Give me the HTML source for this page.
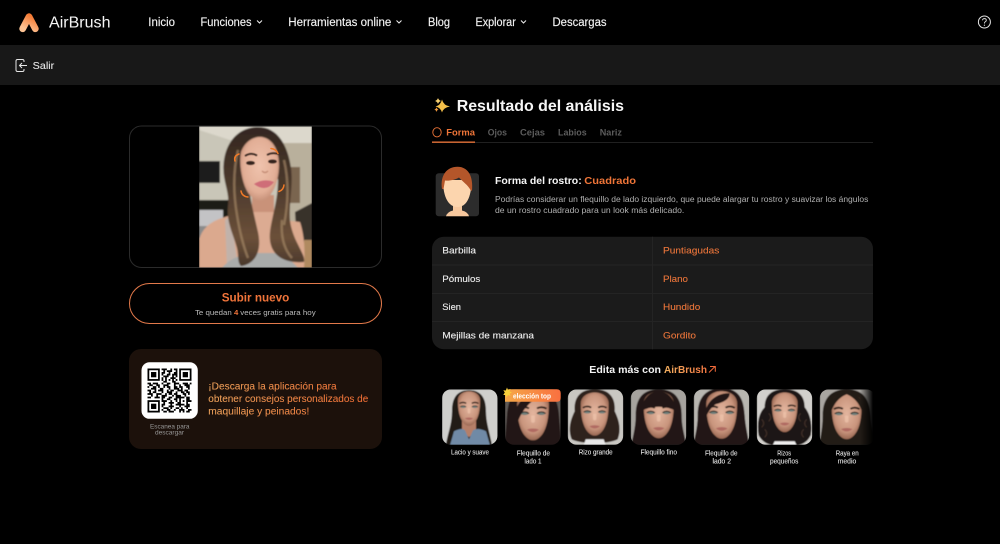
<!DOCTYPE html>
<html lang="es">
<head>
<meta charset="utf-8">
<title>AirBrush</title>
<style>
html,body{margin:0;padding:0;background:#000;width:1000px;height:544px;overflow:hidden}
svg.root{display:block;filter:blur(.22px)}
text{font-family:"Liberation Sans",Arial,sans-serif}
.n{font-size:11.5px;fill:#f2f2f2;stroke:#f2f2f2;stroke-width:.15}
.b{font-weight:bold}
.r{font-size:9.5px;fill:#eee;stroke:#eee;stroke-width:.12}
.v{font-size:9.5px;fill:#e8743a;stroke:#e8743a;stroke-width:.12}
.t{font-size:9.5px;font-weight:bold;fill:#5c5c5c}
.p{font-size:8px;fill:#b0b0b0}
.l{font-size:7px;fill:#e6e6e6;stroke:#e6e6e6;stroke-width:.08}
.q{font-size:10px;fill:url(#qt);stroke:url(#qt);stroke-width:.08}
</style>
</head>
<body>
<svg class="root" xmlns="http://www.w3.org/2000/svg" width="1000" height="544" viewBox="0 0 1000 544">
<defs>
<linearGradient id="lg" x1="0.8" y1="0" x2="0.2" y2="1"><stop offset="0" stop-color="#f47a34"/><stop offset="1" stop-color="#fdc394"/></linearGradient>
<linearGradient id="qt" gradientUnits="userSpaceOnUse" x1="208" y1="0" x2="368" y2="0"><stop offset="0" stop-color="#eba059"/><stop offset="1" stop-color="#ea6a32"/></linearGradient>
<linearGradient id="ab" gradientUnits="userSpaceOnUse" x1="664" y1="0" x2="716" y2="0"><stop offset="0" stop-color="#f2b060"/><stop offset="1" stop-color="#f06a3a"/></linearGradient>
<linearGradient id="bd" x1="0" y1="0" x2="1" y2="0"><stop offset="0" stop-color="#f5a848"/><stop offset="1" stop-color="#f97040"/></linearGradient>
<linearGradient id="fade" x1="0" y1="0" x2="1" y2="0"><stop offset="0" stop-color="#000" stop-opacity="0"/><stop offset="1" stop-color="#000"/></linearGradient>
<linearGradient id="hairM" gradientUnits="userSpaceOnUse" x1="0" y1="127" x2="0" y2="265"><stop offset="0" stop-color="#33261f"/><stop offset=".4" stop-color="#4a382b"/><stop offset=".8" stop-color="#6b5039"/><stop offset="1" stop-color="#4a382b"/></linearGradient>
<radialGradient id="sk" cx=".5" cy=".45" r=".6"><stop offset="0" stop-color="#e3b59e"/><stop offset=".65" stop-color="#c9957d"/><stop offset="1" stop-color="#8a5a46"/></radialGradient>
<radialGradient id="skm" cx=".5" cy=".45" r=".6"><stop offset="0" stop-color="#efc3ad"/><stop offset=".7" stop-color="#e2ae96"/><stop offset="1" stop-color="#bd8870"/></radialGradient>
<filter id="bl" x="-10%" y="-10%" width="120%" height="120%"><feGaussianBlur stdDeviation=".8"/></filter>
<filter id="bs" x="-10%" y="-10%" width="120%" height="120%"><feGaussianBlur stdDeviation=".55"/></filter>
<clipPath id="ph"><rect x="199" y="126.500" width="113" height="141"/></clipPath>
<clipPath id="th"><rect width="55.500" height="55.500" rx="9"/></clipPath>
<g id="face">
<g transform="scale(1.120,1)">
<path d="M-10-10C-10-16-5-19 0-19S10-16 10-10C10 0 8.500 8 5 12.500 3 15 1.500 15.500 0 15.500S-3 15-5 12.500C-8.500 8-10 0-10-10Z" fill="url(#sk)"/>
<path d="M-8.500-6.800Q-5.500-8.800-2.500-7M8.500-6.800Q5.500-8.800 2.500-7" fill="none" stroke="#2a1c16" stroke-width="1.300"/>
<ellipse cx="-5.200" cy="-3.500" rx="2.600" ry="1.200" fill="#6f7f7a"/>
<ellipse cx="5.200" cy="-3.500" rx="2.600" ry="1.200" fill="#6f7f7a"/>
<path d="M-8-3.400Q-5.200-5.600-2.500-3.400M8-3.400Q5.200-5.600 2.500-3.400" fill="none" stroke="#1e1410" stroke-width=".7"/>
<path d="M-1.200-2V2.500Q0 4 1.200 2.500V-2Z" fill="#efc4ad" opacity=".7"/>
<path d="M-3.800 8Q0 6.300 3.800 8 0 11.500-3.800 8Z" fill="#b06a62"/>
</g>
</g>
</defs>

<rect width="1000" height="544" fill="#000"/>

<!-- header -->
<path d="M22.700 28.700 29 16.700 35.300 28.700" fill="none" stroke="url(#lg)" stroke-width="6.800" stroke-linecap="round" stroke-linejoin="round"/>
<text x="49" y="27.600" font-size="16" fill="#f4f4f4" textLength="61.500" lengthAdjust="spacingAndGlyphs">AirBrush</text>
<text class="n" x="148.300" y="26" textLength="26.700" lengthAdjust="spacingAndGlyphs">Inicio</text>
<text class="n" x="200.500" y="26" textLength="51" lengthAdjust="spacingAndGlyphs">Funciones</text>
<path d="M257 20.500 259.500 23 262 20.500" fill="none" stroke="#eee" stroke-width="1"/>
<text class="n" x="288.300" y="26" textLength="103" lengthAdjust="spacingAndGlyphs">Herramientas online</text>
<path d="M396.500 20.500 399 23 401.500 20.500" fill="none" stroke="#eee" stroke-width="1"/>
<text class="n" x="428" y="26" textLength="22" lengthAdjust="spacingAndGlyphs">Blog</text>
<text class="n" x="475.500" y="26" textLength="40.300" lengthAdjust="spacingAndGlyphs">Explorar</text>
<path d="M521 20.500 523.500 23 526 20.500" fill="none" stroke="#eee" stroke-width="1"/>
<text class="n" x="552.500" y="26" textLength="54" lengthAdjust="spacingAndGlyphs">Descargas</text>
<circle cx="984.400" cy="22" r="6" fill="none" stroke="#e6e6e6" stroke-width="1"/>
<path d="M982.500 20.300Q982.700 18.600 984.500 18.600 986.300 18.700 986.300 20.300 986.200 21.400 985 22 984.400 22.400 984.400 23.500" fill="none" stroke="#e6e6e6" stroke-width=".9"/>
<circle cx="984.400" cy="25.200" r=".6" fill="#e6e6e6"/>

<!-- sub bar -->
<rect y="45" width="1000" height="40" fill="#181818"/>
<path d="M24 62V61Q24 59.500 22.500 59.500H17.500Q16 59.500 16 61V70Q16 71.500 17.500 71.500H22.500Q24 71.500 24 70V69" fill="none" stroke="#e6e6e6" stroke-width="1"/>
<path d="M27 65.500H19.500M22 63 19.500 65.500 22 68" fill="none" stroke="#e6e6e6" stroke-width="1"/>
<text x="32.700" y="69" font-size="10" fill="#e6e6e6" stroke="#e6e6e6" stroke-width=".1" textLength="21.500" lengthAdjust="spacingAndGlyphs">Salir</text>

<!-- photo card -->
<rect x="129.500" y="126" width="252" height="141.500" rx="12" fill="#000" stroke="#2b2b2b"/>
<g clip-path="url(#ph)">
<g filter="url(#bl)">
<rect x="199" y="126" width="113" height="142" fill="#c9c6b8"/>
<path d="M199 126H312V143L280 146 230 140 199 130Z" fill="#dcd8cc"/>
<rect x="282" y="143" width="30" height="85" fill="#b9b09c"/>
<rect x="199" y="161" width="21" height="22" fill="#1a1c1a"/>
<rect x="288" y="167" width="12" height="36" fill="#7a6550"/>
<rect x="199" y="200" width="35" height="18" fill="#1f1c19"/>
<rect x="199" y="210" width="24" height="16" fill="#c3c3c5"/>
<rect x="199" y="226" width="10" height="12" fill="#8a8a8a"/>
<path d="M295 212 312 203V268H298Z" fill="#39302a"/>
<rect x="304" y="240" width="8" height="28" fill="#b08a60"/>
<path d="M199 268V240Q203 224 222 218L234 214 300 222Q306 240 304 268Z" fill="#dba98e"/>
<path d="M252 195H274V215Q262 228 252 215Z" fill="#c99279"/>
<path d="M252 212H275V255H252Z" fill="#dcab92"/>
<path d="M227 268 225 220 231 216 238 268Z" fill="#b7b7b7" opacity=".7"/>
<path d="M222 268Q232 255 255 253L272 253Q285 253 298 268Z" fill="#a9abaa"/>
<path d="M258 127C240 127 227 140 224 160 221 180 230 190 228 206 226 222 234 236 237 248 239 256 237 262 241 266 256 264 262 250 258 232 254 214 250 200 248 180L246 150 270 148 278 180C278 200 272 216 270 232 268 250 278 264 304 262 306 256 296 244 292 230 286 212 294 190 291 168 288 146 278 127 258 127Z" fill="url(#hairM)"/>
<path d="M238 150Q231 180 237 215M284 160Q291 190 284 225M237 215Q241 240 248 258M282 220Q280 245 292 258" fill="none" stroke="#a88a68" stroke-width="2.400" opacity=".65"/>
<path d="M241 152C245 141 254 136 262 137 273 139 279 150 279 165 279 181 273 195 265 200 258 203 250 198 246 189 241 178 239 161 241 152Z" fill="url(#skm)"/>
</g>
<g filter="url(#bs)">
<path d="M245 156Q251 152 257 155.500M267 155Q272 152 279 154" fill="none" stroke="#2c1d16" stroke-width="1.600"/>
<ellipse cx="250.500" cy="163" rx="4.300" ry="1.900" fill="#33231c"/>
<ellipse cx="272.500" cy="161.500" rx="4.300" ry="1.900" fill="#33231c"/>
<path d="M262 171Q265 174 268 171" fill="none" stroke="#c68f78" stroke-width="1.300"/>
<path d="M254 184Q264 178 274 182 266 193 254 184Z" fill="#cf6d78"/>
</g>
<g fill="none" stroke="#f07a28" stroke-width="1.500" stroke-linecap="round">
<path d="M235 161Q233.500 156 239 154"/>
<path d="M271 148.500Q276 149 278 153.500"/>
<path d="M241 191Q242 196.500 248 197"/>
<path d="M284 185Q283.500 190 279 191.500"/>
</g>
</g>

<!-- upload button -->
<rect x="129.500" y="283.500" width="252" height="40" rx="20" fill="#000" stroke="#e2794a"/>
<text x="221.700" y="301.700" font-size="12" class="b" fill="#f0743a" textLength="67.600" lengthAdjust="spacingAndGlyphs">Subir nuevo</text>
<text font-size="7.500" fill="#bbb" x="195" y="315" textLength="36.700" lengthAdjust="spacingAndGlyphs">Te quedan</text>
<text font-size="7.500" fill="#f0743a" font-weight="bold" x="234" y="315" textLength="4.300" lengthAdjust="spacingAndGlyphs">4</text>
<text font-size="7.500" fill="#bbb" x="240.300" y="315" textLength="75.400" lengthAdjust="spacingAndGlyphs">veces gratis para hoy</text>

<!-- QR card -->
<rect x="129" y="349" width="253" height="100" rx="12" fill="#1c110b"/>
<rect x="141.500" y="362.300" width="56.300" height="56.500" rx="8" fill="#fff"/>
<svg x="147.500" y="368.500" width="44" height="44" viewBox="0 0 25 25">
<g fill="none" stroke="#000" stroke-width="1">
<rect x=".5" y=".5" width="6" height="6"/><rect x="18.500" y=".5" width="6" height="6"/><rect x=".5" y="18.500" width="6" height="6"/>
</g>
<rect x="2" y="2" width="3" height="3"/><rect x="20" y="2" width="3" height="3"/><rect x="2" y="20" width="3" height="3"/>
<path fill="none" stroke="#000" d="M8 .5h3m2 0h1m1 0h2M9 1.500h1m1 0h3m2 0h1M8 2.500h2m2 0h1m2 0h2M8 3.500h1m2 0h2m1 0h3M9 4.500h3m2 0h1m1 0h1M8 5.500h1m1 0h1m2 0h3M8 6.500h1m1 0h1m1 0h1m1 0h1m1 0h1M9 7.500h2m3 0h2M0 8.500h2m1 0h3m2 0h1m2 0h2m2 0h3m2 0h3m1 0h1M1 9.500h2m2 0h2m2 0h3m3 0h1m2 0h1m2 0h3M0 10.500h1m2 0h2m1 0h1m2 0h1m1 0h2m2 0h2m1 0h2m2 0h2M2 11.500h3m2 0h2m3 0h1m2 0h3m1 0h1m3 0h1M0 12.500h2m2 0h1m1 0h3m2 0h1m1 0h2m2 0h3m1 0h2M1 13.500h1m1 0h2m3 0h1m2 0h3m2 0h1m2 0h2m1 0h2M0 14.500h3m2 0h3m2 0h1m1 0h2m1 0h2m3 0h2m1 0h1M2 15.500h1m2 0h1m2 0h3m3 0h1m1 0h3m2 0h1M0 16.500h2m2 0h3m1 0h2m2 0h2m2 0h5m1 0h2M8 17.500h1m2 0h2m2 0h2m1 0h1m3 0h2M8 18.500h3m2 0h1m2 0h1m1 0h1m1 0h1m1 0h3M9 19.500h1m2 0h3m2 0h2m3 0h1M8 20.500h2m3 0h1m2 0h5m1 0h2M8 21.500h1m3 0h3m3 0h1m2 0h3M9 22.500h3m1 0h1m2 0h2m1 0h1m2 0h1M8 23.500h1m2 0h2m2 0h1m2 0h3m2 0h2M9 24.500h2m1 0h3m3 0h1m1 0h1m1 0h2"/>
</svg>
<text x="150" y="428.700" font-size="6" fill="#9a9a9a" textLength="39.500" lengthAdjust="spacingAndGlyphs">Escanea para</text>
<text x="155" y="434.700" font-size="6" fill="#9a9a9a" textLength="29" lengthAdjust="spacingAndGlyphs">descargar</text>
<text class="q" x="208.300" y="389.300" textLength="128.400" lengthAdjust="spacingAndGlyphs">¡Descarga la aplicación para</text>
<text class="q" x="208.300" y="401.800" textLength="160" lengthAdjust="spacingAndGlyphs">obtener consejos personalizados de</text>
<text class="q" x="208.300" y="414.500" textLength="101" lengthAdjust="spacingAndGlyphs">maquillaje y peinados!</text>

<!-- title -->
<path d="M442 99.500Q443.500 105.500 450 106.500 443.500 107.500 442 112.500 440.500 107.500 435.500 106.500 440.500 105.500 442 99.500Z" fill="#f5c04a"/>
<path d="M438 98Q438.600 100 441 101 438.600 101.800 438 104 437.400 101.800 435 101 437.400 100 438 98Z" fill="#f7d070"/>
<path d="M436.500 107.500Q437 109 438.500 109.500 437 110 436.500 112 436 110 434.300 109.500 436 109 436.500 107.500Z" fill="#f09a3e"/>
<text x="456.700" y="110.800" font-size="16" class="b" fill="#f6f6f6" textLength="167.300" lengthAdjust="spacingAndGlyphs">Resultado del análisis</text>

<!-- tabs -->
<ellipse cx="437" cy="132.300" rx="4.200" ry="4.600" fill="none" stroke="#ef7538" stroke-width=".9"/>
<text class="t" x="446.300" y="135.500" style="fill:#ef7538" textLength="28.700" lengthAdjust="spacingAndGlyphs">Forma</text>
<text class="t" x="487.700" y="135.500" textLength="19.300" lengthAdjust="spacingAndGlyphs">Ojos</text>
<text class="t" x="520" y="135.500" textLength="25" lengthAdjust="spacingAndGlyphs">Cejas</text>
<text class="t" x="558" y="135.500" textLength="28.700" lengthAdjust="spacingAndGlyphs">Labios</text>
<text class="t" x="599.700" y="135.500" textLength="22.300" lengthAdjust="spacingAndGlyphs">Nariz</text>
<rect x="432" y="142" width="441" height="1" fill="#202020"/>
<rect x="432" y="141.500" width="43" height="1.300" fill="#ef7538"/>

<!-- avatar -->
<rect x="435.700" y="173.300" width="43.300" height="43" rx="3" fill="#2c2c2c"/>
<path d="M446 216.300Q447 212 453 210.500V202H462V210.500Q468 212 469 216.300Z" fill="#f7c89e"/>
<path d="M443 180C443 198 449 207 457.500 207 466 207 471.500 198 471.500 180Z" fill="#fcd5ae"/>
<path d="M442 189C440 175 447 166.700 457.500 166.700 468 166.700 473.500 176 472 191L470.500 190C468 185 463 182 459 177.500 455 180 449 181 445 180.500L443.500 189Z" fill="#b4562a"/>

<!-- description -->
<text x="495" y="184.200" font-size="10.500" class="b" fill="#f6f6f6" textLength="86.700" lengthAdjust="spacingAndGlyphs">Forma del rostro:</text>
<text x="584.300" y="184.200" font-size="10.500" class="b" fill="#ef7538" textLength="51.700" lengthAdjust="spacingAndGlyphs">Cuadrado</text>
<text class="p" x="495" y="202" textLength="373.300" lengthAdjust="spacingAndGlyphs">Podrías considerar un flequillo de lado izquierdo, que puede alargar tu rostro y suavizar los ángulos</text>
<text class="p" x="495" y="213" textLength="189.300" lengthAdjust="spacingAndGlyphs">de un rostro cuadrado para un look más delicado.</text>

<!-- table -->
<rect x="432" y="236.700" width="441" height="112.600" rx="12" fill="#1b1b1b"/>
<g fill="#242424">
<rect x="432" y="264.500" width="441" height="1"/><rect x="432" y="293" width="441" height="1"/><rect x="432" y="321" width="441" height="1"/>
<rect x="652" y="236.700" width="1" height="112.600"/>
</g>
<text class="r" x="442.300" y="253.500" textLength="33.700" lengthAdjust="spacingAndGlyphs">Barbilla</text>
<text class="r" x="442.300" y="281.800" textLength="38" lengthAdjust="spacingAndGlyphs">Pómulos</text>
<text class="r" x="442.300" y="310" textLength="18.700" lengthAdjust="spacingAndGlyphs">Sien</text>
<text class="r" x="442.300" y="338.500" textLength="91.700" lengthAdjust="spacingAndGlyphs">Mejillas de manzana</text>
<text class="v" x="663" y="253.500" textLength="56.300" lengthAdjust="spacingAndGlyphs">Puntiagudas</text>
<text class="v" x="663" y="281.800" textLength="25" lengthAdjust="spacingAndGlyphs">Plano</text>
<text class="v" x="663" y="310" textLength="37.300" lengthAdjust="spacingAndGlyphs">Hundido</text>
<text class="v" x="663" y="338.500" textLength="33" lengthAdjust="spacingAndGlyphs">Gordito</text>

<!-- promo heading -->
<text x="589.300" y="372.800" font-size="10.500" class="b" fill="#f4f4f4" textLength="71.700" lengthAdjust="spacingAndGlyphs">Edita más con</text>
<text x="664" y="372.800" font-size="10.500" class="b" fill="url(#ab)" textLength="43" lengthAdjust="spacingAndGlyphs">AirBrush</text>
<path d="M709 372.500 715 366.500M710 366.500H715.300V371.800" fill="none" stroke="#f06a3a" stroke-width="1"/>

<!-- thumbnails -->
<g transform="translate(442,389.300)"><g clip-path="url(#th)"><g filter="url(#bs)">
<rect width="56" height="56" fill="#cfcfcc"/>
<path d="M27 1C14 1 10 10 10 22 10 36 5 46 4 56H50C48 44 44 34 44 22 44 10 40 1 27 1Z" fill="#221a18"/>
<path d="M20 30H34V42L27 48 20 42Z" fill="#b57f68"/>
<path d="M8 56 12 42Q20 38 23 41L27 50 31 41Q36 38 44 42L48 56Z" fill="#6f8aa6"/>
<use href="#face" transform="translate(27,21) scale(1)"/>
</g></g></g>

<g transform="translate(505,389.300)"><g clip-path="url(#th)"><g filter="url(#bs)">
<rect width="56" height="56" fill="#5e5a56"/>
<path d="M28-4C8-4 3 12 2 26 1 40 0 50 0 56H56C56 48 55 40 54 26 53 12 48-4 28-4Z" fill="#211714"/>
<use href="#face" transform="translate(28,29) scale(1.420)"/>
<path d="M10 28C10 12 22 4 34 4 30 12 20 14 13 32Z" fill="#211714"/>
</g></g></g>

<g transform="translate(567.700,389.300)"><g clip-path="url(#th)"><g filter="url(#bs)">
<rect width="56" height="56" fill="#c9c7c2"/>
<path d="M27 0C11 0 6 10 7 22 3 30 0 40 4 50 12 55 42 55 50 50 54 40 51 30 47 22 48 10 43 0 27 0Z" fill="#2e211c"/>
<path d="M18 50H36L38 56H16Z" fill="#e8e8e8"/>
<use href="#face" transform="translate(27,27) scale(1.250)"/>
</g></g></g>

<g transform="translate(630.700,389.300)"><g clip-path="url(#th)"><g filter="url(#bs)">
<rect width="56" height="56" fill="#a6a39e"/>
<path d="M28 0C10 0 5 12 5 26 5 40 1 50 1 56H55C55 48 51 40 51 26 51 12 46 0 28 0Z" fill="#231916"/>
<use href="#face" transform="translate(28,28) scale(1.350)"/>
<path d="M11 22C11 9 20 2 28 2S45 9 45 22C38 16 18 16 11 22Z" fill="#231916"/>
</g></g></g>

<g transform="translate(693.700,389.300)"><g clip-path="url(#th)"><g filter="url(#bs)">
<rect width="56" height="56" fill="#b8b6b0"/>
<path d="M28-1C9-1 4 12 4 26 4 40 0 50 0 56H55C55 48 52 40 51 26 50 12 47-1 28-1Z" fill="#221815"/>
<use href="#face" transform="translate(28,28) scale(1.380)"/>
<path d="M11 30C10 14 22 3 36 4 36 10 30 13 22 15 17 18 14 24 11 30Z" fill="#221815"/>
</g></g></g>

<g transform="translate(756.700,389.300)"><g clip-path="url(#th)"><g filter="url(#bs)">
<rect width="56" height="56" fill="#d2d0cc"/>
<path d="M28 0C13 0 8 8 8 18 2 24 0 34 2 46 6 54 14 56 18 56H38C44 56 50 54 54 46 56 34 53 24 48 18 48 8 43 0 28 0Z" fill="#1c1412"/>
<path d="M5 30Q9 34 5 38M8 40Q12 44 8 48M50 30Q46 34 50 38M47 40Q43 44 47 48M12 24Q16 28 12 32M44 24Q40 28 44 32" fill="none" stroke="#3d2e28" stroke-width="1.200"/>
<path d="M18 52H38L40 56H16Z" fill="#eee"/>
<use href="#face" transform="translate(28,25) scale(1.150)"/>
</g></g></g>

<g transform="translate(819.700,389.300)"><g clip-path="url(#th)"><g filter="url(#bs)">
<rect width="56" height="56" fill="#a8a5a0"/>
<path d="M27 0C9 0 3 12 3 26 3 40 0 50 0 56H55C55 48 52 40 51 26 50 12 45 0 27 0Z" fill="#241a16"/>
<use href="#face" transform="translate(27,29) scale(1.350)"/>
<path d="M27 5C20 8 13 14 10 28 7 16 15 2 27 2S47 16 44 28C41 14 34 8 27 5Z" fill="#241a16"/>
</g></g></g>
<rect x="860" y="385" width="13" height="64" fill="url(#fade)"/>
<rect x="873" y="385" width="10" height="64" fill="#000"/>

<!-- badge -->
<path d="M505 393.500Q505 389.300 509.500 389.300H556.700Q560.700 389.300 560.700 393.300V398Q560.700 401.700 557 401.700H505Z" fill="url(#bd)"/>
<path d="M507 387.500 508 390 510.500 389 509.500 391.500 512 392.500 509.500 393.500 510.500 396 508 395 506.500 397.500 505.800 395 503.300 395 504.800 392.500 503.300 390.300 505.800 390.500Z" fill="#f8d03c"/>
<text x="513" y="398.300" font-size="7.500" class="b" fill="#fff" textLength="38" lengthAdjust="spacingAndGlyphs">elección top</text>

<!-- labels -->
<text class="l" x="451" y="454.300" textLength="38" lengthAdjust="spacingAndGlyphs">Lacio y suave</text>
<text class="l" x="516.700" y="455.500" textLength="33.300" lengthAdjust="spacingAndGlyphs">Flequillo de</text>
<text class="l" x="524.500" y="463.500" textLength="17" lengthAdjust="spacingAndGlyphs">lado 1</text>
<text class="l" x="578.700" y="454.300" textLength="34" lengthAdjust="spacingAndGlyphs">Rizo grande</text>
<text class="l" x="640.500" y="454.300" textLength="36.500" lengthAdjust="spacingAndGlyphs">Flequillo fino</text>
<text class="l" x="705" y="455.500" textLength="32.500" lengthAdjust="spacingAndGlyphs">Flequillo de</text>
<text class="l" x="712.500" y="463.500" textLength="18.500" lengthAdjust="spacingAndGlyphs">lado 2</text>
<text class="l" x="777.300" y="455.500" textLength="13.700" lengthAdjust="spacingAndGlyphs">Rizos</text>
<text class="l" x="770" y="463.500" textLength="28.300" lengthAdjust="spacingAndGlyphs">pequeños</text>
<text class="l" x="835.700" y="455.500" textLength="23" lengthAdjust="spacingAndGlyphs">Raya en</text>
<text class="l" x="837.700" y="463.500" textLength="18.600" lengthAdjust="spacingAndGlyphs">medio</text>
</svg>
</body>
</html>
